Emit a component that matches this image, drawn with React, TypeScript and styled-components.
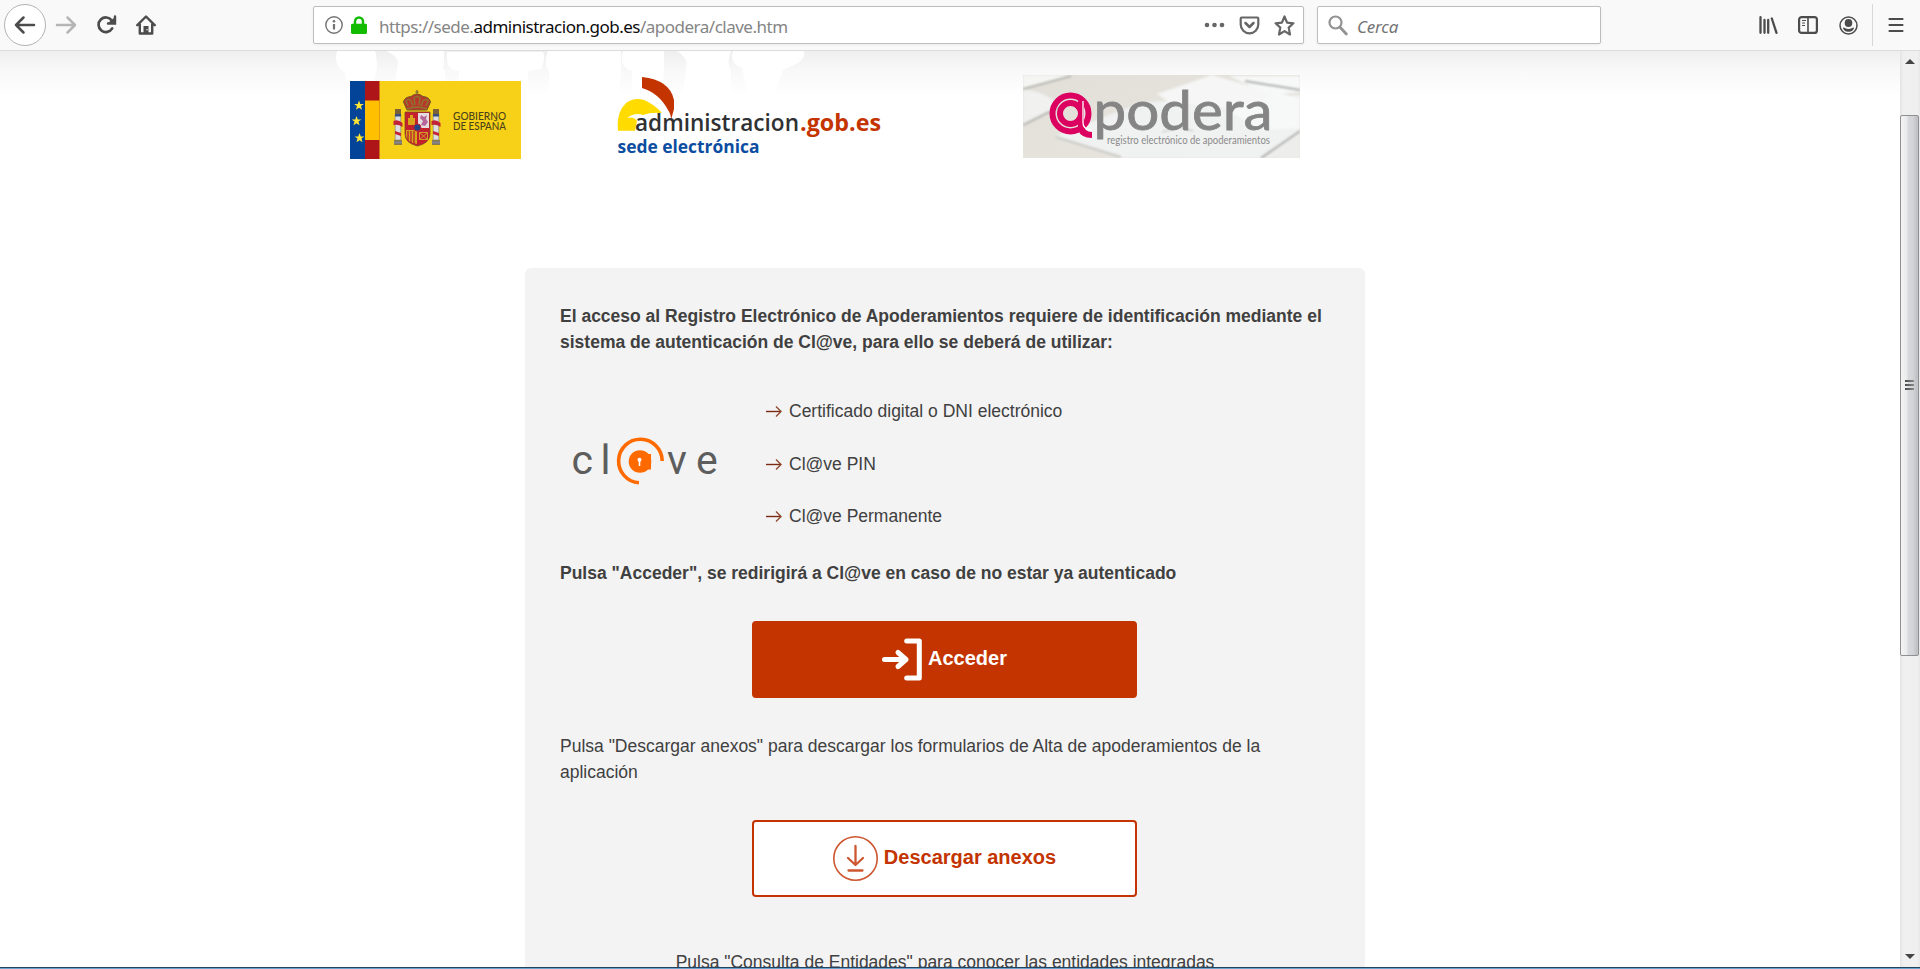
import React from "react";
import styled, { createGlobalStyle } from "styled-components";

const GlobalStyle = createGlobalStyle`
  *, *::before, *::after { box-sizing: border-box; }
  body { margin: 0; overflow: hidden; background: #fff; font-family: "Liberation Sans", Arial, sans-serif; }
  p, ul { margin: 0; padding: 0; }
  svg { display: block; flex: none; }
`;

const Window = styled.div`
  width: 1920px;
  height: 969px;
  display: flex;
  flex-direction: column;
  overflow: hidden;
`;

const Toolbar = styled.header`
  height: 51px;
  flex: none;
  display: flex;
  align-items: flex-start;
  padding: 4px 16px 0 4px;
  background: #f9f9f9;
  border-bottom: 1px solid #dcdcdc;
`;

const NavButtons = styled.div`
  width: 309px;
  height: 42px;
  display: flex;
  align-items: center;
`;

const BackButton = styled.div`
  width: 42px;
  height: 42px;
  display: flex;
  align-items: center;
  justify-content: center;
  border: 1px solid #b4b4b4;
  border-radius: 50%;
  background: #fff;
`;

const NavIcon = styled.div<{ $left: number }>`
  margin-left: ${(p) => p.$left}px;
`;

const Field = styled.div<{ $width: number }>`
  width: ${(p) => p.$width}px;
  height: 38px;
  margin-top: 2px;
  display: flex;
  align-items: center;
  background: #fff;
  border: 1px solid #bdbdbd;
  border-radius: 2px;
  box-shadow: 0 1px 3px rgba(0, 0, 0, 0.06);
  font-family: "Noto Sans", "Open Sans", sans-serif;
`;

const AddressField = styled(Field)`
  padding: 0 8px 0 11px;
`;

const SearchField = styled(Field)`
  margin-left: 13px;
  padding-left: 10px;
`;

const Address = styled.div`
  margin-left: 12px;
  padding-top: 3px;
  flex: 1;
  font-size: 17px;
  letter-spacing: -0.5px;
  white-space: nowrap;
  color: #858585;
`;

const Domain = styled.span`
  color: #0c0c0d;
`;

const SearchHint = styled.div`
  margin-left: 9px;
  padding-top: 3px;
  font-size: 17px;
  font-style: italic;
  letter-spacing: -0.2px;
  color: #757575;
`;

const Tools = styled.div`
  flex: 1;
  height: 42px;
  display: flex;
  align-items: center;
  justify-content: flex-end;
`;

const Separator = styled.div`
  width: 1px;
  height: 42px;
  margin: 0 15px 0 14px;
  background: #d8d8d8;
`;

const Viewport = styled.div`
  height: 916px;
  flex: none;
  display: flex;
  overflow: hidden;
`;

const Page = styled.main`
  position: relative;
  flex: 1;
  background: linear-gradient(#efefef 0, #f8f8f8 18px, #fff 45px);
`;

const MapShadow = styled.svg`
  position: absolute;
  left: 330px;
  top: 0;
`;

const Logos = styled.div`
  position: relative;
  height: 217px;
  display: flex;
  align-items: flex-start;
  padding: 24px 0 0 350px;
`;

const GovernmentLogo = styled.svg`
  margin-top: 6px;
`;

const PortalLogo = styled.svg`
  margin: 1px 0 0 96px;
`;

const ApoderaLogo = styled.svg`
  margin-left: 136px;
`;

const Card = styled.section`
  width: 840px;
  height: 800px;
  margin-left: 525px;
  padding: 35px;
  border-radius: 6px;
  background: #f3f3f3;
  color: #404040;
  font-size: 17.5px;
  line-height: 26px;
`;

const Paragraph = styled.p<{ $bold?: boolean; $top?: number; $center?: boolean }>`
  margin-top: ${(p) => p.$top ?? 0}px;
  font-weight: ${(p) => (p.$bold ? 700 : 400)};
  text-align: ${(p) => (p.$center ? "center" : "left")};
`;

const Methods = styled.div`
  display: flex;
  align-items: flex-start;
  margin: 43px 0 0 10px;
`;

const Clave = styled.svg`
  margin-top: 38px;
`;

const MethodList = styled.ul`
  margin-left: 46px;
  display: grid;
  row-gap: 26.5px;
  list-style: none;
`;

const Method = styled.li`
  display: flex;
  align-items: center;
  gap: 7px;
`;

const ActionButton = styled.button<{ $outlined?: boolean }>`
  width: 385px;
  height: 77px;
  margin: 35px 0 0 192px;
  padding: 0 0 2px;
  display: flex;
  align-items: center;
  justify-content: center;
  gap: 6px;
  border: 2px solid #c33400;
  border-radius: 4px;
  background: ${(p) => (p.$outlined ? "#fff" : "#c33400")};
  color: ${(p) => (p.$outlined ? "#c33400" : "#fff")};
  font: bold 20px "Liberation Sans", Arial, sans-serif;
  svg { margin-top: 2px; }
`;

const Scrollbar = styled.aside`
  width: 20px;
  display: flex;
  flex-direction: column;
  align-items: center;
  background: linear-gradient(90deg, #e3e3e3, #efefef 3px, #f0f0f0 17px, #e8e8e8);
`;

const ScrollArrow = styled.div<{ $down?: boolean }>`
  width: 18px;
  height: ${(p) => (p.$down ? 13 : 64)}px;
  padding: ${(p) => (p.$down ? 0 : 8)}px 0 0 4px;
`;

const Thumb = styled.div`
  width: 19px;
  height: 541px;
  margin-right: 1px;
  margin-bottom: 298px;
  padding-bottom: 2px;
  display: flex;
  flex-direction: column;
  align-items: center;
  justify-content: center;
  gap: 2px;
  border: 1px solid #8f8f93;
  border-radius: 2px;
  background: linear-gradient(90deg, #f4f4f4 0, #e9eaeb 6px, #d8d9dc 7px, #d3d4d7 12px, #bfc0c5 16px, #c9c9cd 100%);
`;

const Grip = styled.div`
  width: 9px;
  height: 2px;
  background: linear-gradient(90deg, #4b4b4b, #8a8a8a);
`;

const Taskbar = styled.footer`
  height: 2px;
  flex: none;
  background: linear-gradient(#24435c 50%, #6ba3cf 50%);
`;

const dark = "#4c4c4c";

const BackIcon = () => (
  <svg width="22" height="20" viewBox="0 0 22 20" fill="none" stroke={dark} strokeWidth="2.5" strokeLinecap="round" strokeLinejoin="round">
    <path d="M20 10H2M9.5 2.5 2 10l7.5 7.5" />
  </svg>
);

const ForwardIcon = () => (
  <svg width="22" height="20" viewBox="0 0 22 20" fill="none" stroke="#b5b5b5" strokeWidth="2.5" strokeLinecap="round" strokeLinejoin="round">
    <path d="M2 10h18M12.500 2.500 20 10l-7.500 7.500" />
  </svg>
);

const ReloadIcon = () => (
  <svg width="20" height="20" viewBox="0 0 20 20" fill="none" stroke={dark} strokeWidth="2.700">
    <path d="M15.200 13.400A7.300 7.300 0 1 1 14.800 5.500" strokeLinecap="round" />
    <path d="M18 1.500v7h-7" strokeWidth="2.400" strokeLinecap="round" />
    <path d="m18 2-7 6h7z" fill={dark} stroke="none" />
  </svg>
);

const HomeIcon = () => (
  <svg width="20" height="20" viewBox="0 0 20 20" fill="none" stroke={dark} strokeWidth="2.400" strokeLinejoin="round" strokeLinecap="round">
    <path d="m1.300 10.200 8.700-8.700 8.700 8.700M3.800 9.500v9h12.400v-9" />
    <path d="M7.500 18v-7h5v7z" fill={dark} stroke="none" />
    <circle cx="11" cy="14.700" r=".7" fill="#fff" stroke="none" />
  </svg>
);

const InfoIcon = () => (
  <svg width="18" height="18" viewBox="0 0 18 18" fill="none" stroke="#737373">
    <circle cx="9" cy="9" r="8.200" strokeWidth="1.400" />
    <path d="M9 8v5.500" strokeWidth="2.200" />
    <circle cx="9" cy="5.200" r="1.300" fill="#737373" stroke="none" />
  </svg>
);

const LockIcon = () => (
  <svg width="16" height="18" viewBox="0 0 16 18">
    <path d="M4 9V5.500a4 4 0 0 1 8 0V9" fill="none" stroke="#12bc00" strokeWidth="2.500" />
    <rect y="7.800" width="16" height="10.200" rx="1.400" fill="#12bc00" />
  </svg>
);

const MoreIcon = () => (
  <svg width="21" height="6" viewBox="0 0 21 6" fill="#666">
    <circle cx="3" cy="3" r="2.300" /><circle cx="10.500" cy="3" r="2.300" /><circle cx="18" cy="3" r="2.300" />
  </svg>
);

const PocketIcon = () => (
  <svg width="21" height="19" viewBox="0 0 21 19" fill="none" stroke="#666" strokeWidth="2.200" strokeLinecap="round" strokeLinejoin="round">
    <path d="M2.700 1.500h15.600q1 0 1 1V8.500a8.800 8.800 0 0 1-17.600 0V2.500q0-1 1-1z" />
    <path d="m6.500 7 4 4 4-4" strokeWidth="2.500" />
  </svg>
);

const StarIcon = () => (
  <svg width="21" height="21" viewBox="0 0 21 21" fill="none" stroke="#666" strokeWidth="2.200" strokeLinejoin="round">
    <path d="m10.500 1.500 2.600 6.100 6.300.7-4.700 4.300 1.300 6.900-5.500-3.400-5.500 3.400 1.300-6.900-4.700-4.300 6.300-.7z" />
  </svg>
);

const SearchIcon = () => (
  <svg width="20" height="21" viewBox="0 0 20 21" fill="none" stroke="#929292" strokeLinecap="round">
    <circle cx="7.500" cy="7.500" r="6" strokeWidth="2.200" />
    <path d="m12.300 12.500 6 6.500" strokeWidth="2.800" />
  </svg>
);

const LibraryIcon = () => (
  <svg width="19" height="18" viewBox="0 0 19 18" fill="none" stroke={dark} strokeWidth="2.300" strokeLinecap="round">
    <path d="M1.500 1.200v15.600M5.500 4v12.800M9.200 4v12.800M12.800 2.500l4.700 14.300" />
  </svg>
);

const SidebarIcon = () => (
  <svg width="20" height="18" viewBox="0 0 20 18" fill="none" stroke={dark}>
    <rect x="1.100" y="1.100" width="17.800" height="15.800" rx="2.500" strokeWidth="2.200" />
    <path d="M10 1.500v15" strokeWidth="1.600" />
    <path d="M4 4.500h4M4 7h3M4 9.500h3" strokeWidth="1.200" />
  </svg>
);

const AccountIcon = () => (
  <svg width="19" height="19" viewBox="0 0 19 19" fill={dark}>
    <circle cx="9.500" cy="9.500" r="8.500" fill="none" stroke={dark} strokeWidth="1.500" />
    <ellipse cx="9.500" cy="7" rx="3.800" ry="4.100" />
    <path d="M4 11.400c2 0 2.700 1.500 5.500 1.500s3.500-1.500 5.500-1.500c0 2.600-2.800 4.400-5.500 4.400S4 14 4 11.400z" />
  </svg>
);

const MenuIcon = () => (
  <svg width="16" height="16" viewBox="0 0 16 16" stroke={dark} strokeWidth="2.200" strokeLinecap="round">
    <path d="M1.500 2h13M1.500 8h13M1.500 14h13" />
  </svg>
);

const ArrowIcon = () => (
  <svg width="16" height="12" viewBox="0 0 16 12" fill="none" stroke="#7a2a12" strokeWidth="1.400">
    <path d="M0 6.500h15" />
    <path d="m10 1.500 5 5-5 5" stroke="#8f4a32" />
  </svg>
);

const EnterIcon = () => (
  <svg width="40" height="43" viewBox="0 0 40 43" fill="none" stroke="#fff" strokeLinecap="round" strokeLinejoin="round">
    <path d="M2.500 21.500H24M16 14.500l8 7-8 7" strokeWidth="5" />
    <path d="M24.700 3h12.600v37H24.700" strokeWidth="5" />
  </svg>
);

const DownloadIcon = () => (
  <svg width="45" height="45" viewBox="0 0 45 45" fill="none" stroke="#cd5730" strokeLinecap="round" strokeLinejoin="round">
    <circle cx="22.500" cy="22.500" r="21.700" strokeWidth="1.600" />
    <path d="M22.500 10v18M15 22l7.500 7 7.500-7M15.500 34.500h14" strokeWidth="2.300" />
  </svg>
);

const Background = () => (
  <MapShadow width="490" height="46" viewBox="0 0 490 46" fill="#fff">
    <path d="M7 0h38q2 6 2 18l-4 14-3 14H19l-4-24Q3 14 7 0z" />
    <path d="M56 0q11 4 12 12l-2 14v20h49V19q-4-1-1-6V0z" />
    <path d="M117 1h96q3 7-2 17l-13 2v26h-69V20q-14 0-12-19zM218 0h73v24l-3 22h-69V20q-6-6-1-20z" />
    <path d="M293 0h41v21l-3 25h-29V20q-14-4-9-20zM347 0q6 4 10 11l-5 35h49V20q-5-8 0-20z" />
    <path d="M403 0h71q2 8-8 13l-13 6-5 14-6 13h-23l-7-29q-13-4-9-17z" />
  </MapShadow>
);

const Star = ({ x, y }: { x: number; y: number }) => (
  <path transform={`translate(${x} ${y})`} fill="#ffe535" d="m0-5 1.300 3.400h3.600L2 .600l1 3.700L0 2.200-3 4.300l1-3.700-2.900-2.200h3.600z" />
);

const Pillar = ({ x }: { x: number }) => (
  <g transform={`translate(${x} 0)`}>
    <path d="M-2.800 43h5.600v26h-5.600z" fill="#dcdee2" stroke="#77777c" strokeWidth=".6" />
    <path d="M-3 38h6v5h-6z" fill="#7d6233" />
    <path d="M-3 43h6v2.500h-6z" fill="#3b4d80" />
    <path d="M-4 69h8v5h-8z" fill="#8a7a45" />
    <path d="M-4 70.500h8v2h-8z" fill="#7f8596" />
    <path d="M-4.500 50q4.500-2 9 2v4q-4-3-9-2zM-3 60l6 2v3l-6-2z" fill="#c32336" />
  </g>
);

const Government = () => (
  <GovernmentLogo width="171" height="78" viewBox="0 0 171 78">
    <rect width="171" height="78" fill="#f7d117" />
    <rect width="15" height="78" fill="#034398" />
    <rect x="15" width="14.500" height="78" fill="#ae1519" />
    <rect x="15" y="19.500" width="14.500" height="39.500" fill="#ffc000" />
    <Star x={9} y={24.500} /><Star x={6.500} y={40} /><Star x={9.500} y={57} />
    <g transform="translate(0 -10)">
      <Pillar x={48} /><Pillar x={86} />
      <path d="M55 41h25v22q0 9-12.500 12Q55 72 55 63z" fill="#c4202e" stroke="#7a4b24" strokeWidth=".8" />
      <path d="M68 42h11v15H68z" fill="#e7dce2" />
      <path d="m71 44 3 2 3-2-1 4 2 3-3 4-4-1 2-4-3-3z" fill="#b5679a" />
      <path d="M58 54v-7h2v-3h3v3h2v7z" fill="#d8a51c" />
      <path d="M56 59h11v14q-11-2-11-9z" fill="#d7a31b" />
      <path d="M58 60v10M61 60v12M64 60v13" stroke="#b8222e" strokeWidth="1.300" />
      <path d="M69.500 61.500h8v7h-8zm0 0 8 7m0-7-8 7" fill="none" stroke="#cf9e27" />
      <circle cx="67.300" cy="56.500" r="3.600" fill="#224487" stroke="#bc2730" />
      <path d="M57 39 53.500 31q1-5 7.500-5.500Q64 23 67 23t6 2.500q6.500.5 7.500 5.500L77 39z" fill="#b8382b" stroke="#715b25" />
      <path d="M57 38q10-4 20 0M58 35l-2-5q3-3 5 0l2 5m2-1-1-7q3-3 6 0l-1 7m2 1 2-5q3-3 5 0l-2 5M67 23v-4M65.500 21h3" fill="none" stroke="#8f742e" strokeWidth="1.500" />
    </g>
    <g fill="#4c421a" fontFamily="Lato, sans-serif" fontSize="11" fontWeight="500">
      <text x="103" y="38.500" textLength="53" lengthAdjust="spacingAndGlyphs">GOBIERNO</text>
      <text x="103" y="49" textLength="53" lengthAdjust="spacingAndGlyphs">DE ESPAÑA</text>
    </g>
  </GovernmentLogo>
);

const Portal = () => (
  <PortalLogo width="270" height="84" viewBox="0 0 270 84">
    <path d="M1 54.700Q-1 37 9 27q8-6 18-3 10 4 18 13-11-1-19 2-8-3-16 3 7-2 10 3l-2 9.700z" fill="#ffdb00" />
    <path d="M25 1q28 3 32 23v9l-3 11q0-6-3-10Q42 17 25 12z" fill="#c33400" />
    <g fontFamily={'"Open Sans", "Noto Sans", sans-serif'} fontWeight="600">
      <text x="18" y="54.700" fontSize="24" fill="#2f3133" textLength="164" lengthAdjust="spacingAndGlyphs">administracion</text>
      <text x="183" y="54.700" fontSize="24" fontWeight="700" fill="#c33400" textLength="81" lengthAdjust="spacingAndGlyphs">.gob.es</text>
      <text x="0.500" y="76.700" fontSize="18.500" fontWeight="700" fill="#0b4da0" textLength="142" lengthAdjust="spacingAndGlyphs">sede electrónica</text>
    </g>
  </PortalLogo>
);

const Apodera = () => (
  <ApoderaLogo width="277" height="83" viewBox="0 0 277 83">
    <defs>
      <linearGradient id="desk" x2="1" y2="1">
        <stop stopColor="#e1dfd8" /><stop offset="1" stopColor="#e9e6e0" />
      </linearGradient>
      <filter id="soften"><feGaussianBlur stdDeviation="1" /></filter>
    </defs>
    <rect width="277" height="83" fill="url(#desk)" />
    <g filter="url(#soften)">
      <path d="M0 0h48L0 13z" fill="#f5f5f4" />
      <path d="M0 14 48 1" stroke="#b5b5af" strokeWidth="2" fill="none" />
      <path d="M0 15q20 0 38 16L0 49z" fill="#f1f1f0" />
      <path d="m0 50 38-19" stroke="#b6b6b0" strokeWidth="2" />
      <path d="m33 61 86-34 158-7v36l-40 27H100z" fill="#f0f1f1" />
      <path d="m134 19 55-19 69 20-37 15-75-8z" fill="#f6f6f6" />
      <path d="M206 1h71v16l-29 3zM205 36l50-18 22 5v30l-38 2z" fill="#f7f8f8" />
      <path d="M241 83 277 57v26z" fill="#ededec" />
      <path d="m33 62 65 20" fill="none" stroke="#c9c9c5" strokeWidth="2" />
      <path d="m222 6 55 9M277 56l-39 27" fill="none" stroke="#a7a9a7" strokeWidth="2" />
      <path d="m139 57 17-5 14 4" stroke="#b9b9b7" fill="none" />
    </g>
    <circle cx="47.500" cy="38.500" r="18" fill="none" stroke="#dc0061" strokeWidth="6" />
    <circle cx="47.500" cy="38.500" r="10.500" fill="none" stroke="#dc0061" strokeWidth="6" />
    <path d="M55 26h6v24q0 7 8 7v6q-11 0-14-8z" fill="#dc0061" />
    <path d="M60 26v22q0 6 8 7" fill="none" stroke="#fff" strokeWidth="1.300" />
    <text x="70.500" y="55" fontFamily="Lato, sans-serif" fontSize="54" fontWeight="400" fill="#858585" stroke="#858585" strokeWidth=".8" textLength="179" lengthAdjust="spacingAndGlyphs">podera</text>
    <text x="84" y="69" fontFamily="Lato, sans-serif" fontSize="11.500" fill="#8b8b8b" textLength="163" lengthAdjust="spacingAndGlyphs">registro electrónico de apoderamientos</text>
  </ApoderaLogo>
);

const ClaveLogo = () => (
  <Clave width="150" height="50" viewBox="0 0 150 50">
    <g fontFamily="Roboto, sans-serif" fontSize="41" fill="#5d5d5d">
      <text x="1.500 30.500" y="37.500">cl</text>
      <text x="97 126" y="37.500">ve</text>
    </g>
    <path d="M92.200 25A21.800 21.800 0 1 0 69 46.800" fill="none" stroke="#ff6a00" strokeWidth="3.600" />
    <circle cx="70" cy="25.500" r="11.300" fill="#ff6a00" />
    <path d="M75 18h6v15.500h-6z" fill="#ff6a00" />
    <circle cx="69.500" cy="23.800" r="2" fill="#fff" />
    <path d="M68.700 24h1.600v6h-1.600z" fill="#fff" />
  </Clave>
);

const methods = ["Certificado digital o DNI electrónico", "Cl@ve PIN", "Cl@ve Permanente"];

export default function App() {
  return (
    <Window>
      <GlobalStyle />
      <Toolbar>
        <NavButtons>
          <BackButton><BackIcon /></BackButton>
          <NavIcon $left={9}><ForwardIcon /></NavIcon>
          <NavIcon $left={20}><ReloadIcon /></NavIcon>
          <NavIcon $left={19}><HomeIcon /></NavIcon>
        </NavButtons>
        <AddressField $width={991}>
          <InfoIcon />
          <NavIcon $left={8}><LockIcon /></NavIcon>
          <Address>https://sede.<Domain>administracion.gob.es</Domain>/apodera/clave.htm</Address>
          <MoreIcon />
          <NavIcon $left={14}><PocketIcon /></NavIcon>
          <NavIcon $left={14}><StarIcon /></NavIcon>
        </AddressField>
        <SearchField $width={284}>
          <SearchIcon />
          <SearchHint>Cerca</SearchHint>
        </SearchField>
        <Tools>
          <LibraryIcon />
          <NavIcon $left={20}><SidebarIcon /></NavIcon>
          <NavIcon $left={21}><AccountIcon /></NavIcon>
          <Separator />
          <MenuIcon />
        </Tools>
      </Toolbar>
      <Viewport>
        <Page>
          <Background />
          <Logos>
            <Government />
            <Portal />
            <Apodera />
          </Logos>
          <Card>
            <Paragraph $bold>
              El acceso al Registro Electrónico de Apoderamientos requiere de identificación mediante el
              sistema de autenticación de Cl@ve, para ello se deberá de utilizar:
            </Paragraph>
            <Methods>
              <ClaveLogo />
              <MethodList>
                {methods.map((m) => (
                  <Method key={m}><ArrowIcon />{m}</Method>
                ))}
              </MethodList>
            </Methods>
            <Paragraph $bold $top={31}>Pulsa "Acceder", se redirigirá a Cl@ve en caso de no estar ya autenticado</Paragraph>
            <ActionButton><EnterIcon />Acceder</ActionButton>
            <Paragraph $top={35}>
              Pulsa "Descargar anexos" para descargar los formularios de Alta de apoderamientos de la aplicación
            </Paragraph>
            <ActionButton $outlined><DownloadIcon />Descargar anexos</ActionButton>
            <Paragraph $top={52} $center>Pulsa "Consulta de Entidades" para conocer las entidades integradas</Paragraph>
          </Card>
        </Page>
        <Scrollbar>
          <ScrollArrow>
            <svg width="10" height="5" viewBox="0 0 10 5"><path d="M5 0l5 5H0z" fill="#444" /></svg>
          </ScrollArrow>
          <Thumb>
            <Grip /><Grip /><Grip />
          </Thumb>
          <ScrollArrow $down>
            <svg width="10" height="5" viewBox="0 0 10 5"><path d="M0 0h10L5 5z" fill="#444" /></svg>
          </ScrollArrow>
        </Scrollbar>
      </Viewport>
      <Taskbar />
    </Window>
  );
}
